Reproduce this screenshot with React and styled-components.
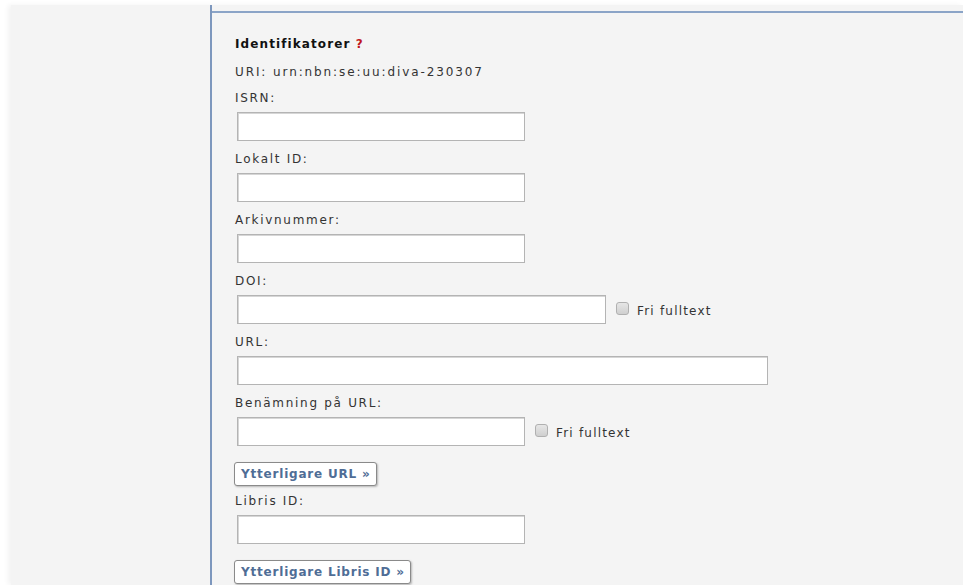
import styled, { createGlobalStyle } from 'styled-components';

const GlobalStyle = createGlobalStyle`
  html, body {
    margin: 0;
    padding: 0;
    background: #ffffff;
  }
  body {
    font-family: "DejaVu Sans", Verdana, sans-serif;
    font-size: 12px;
    color: #333;
  }
`;

const fields = [
  { id: 'isrn', label: 'ISRN:', width: 288 },
  { id: 'local', label: 'Lokalt ID:', width: 288 },
  { id: 'archive', label: 'Arkivnummer:', width: 288 },
  { id: 'doi', label: 'DOI:', width: 369, fulltext: true },
  { id: 'url', label: 'URL:', width: 531 },
  { id: 'urlname', label: 'Benämning på URL:', width: 288, fulltext: true, more: 'Ytterligare URL »' },
  { id: 'libris', label: 'Libris ID:', width: 288, more: 'Ytterligare Libris ID »' },
];

const App = () => {
  return (
    <>
      <GlobalStyle />
      <Page>
        <Sidebar />
        <Main>
          <Panel>
            <Heading>
              Identifikatorer <Help>?</Help>
            </Heading>
            <Uri>URI: urn:nbn:se:uu:diva-230307</Uri>
            {fields.map((f, i) => (
              <Field key={f.id} $afterButton={i > 0 && !!fields[i - 1].more}>
                <Label htmlFor={f.id}>{f.label}</Label>
                <InputRow>
                  <TextInput id={f.id} type="text" $width={f.width} />
                  {f.fulltext && (
                    <CheckLabel>
                      <Check type="checkbox" />
                      Fri fulltext
                    </CheckLabel>
                  )}
                </InputRow>
                {f.more && <MoreButton type="button">{f.more}</MoreButton>}
              </Field>
            ))}
          </Panel>
        </Main>
      </Page>
    </>
  );
};

export default App;

const Page = styled.div`
  display: flex;
  margin: 5px 0 0 11px;
  min-height: 580px;
  background: #f4f4f4;
  box-shadow: -3px 0 5px rgba(0, 0, 0, 0.05);
`;

const Sidebar = styled.aside`
  width: 199px;
  flex-shrink: 0;
`;

const Main = styled.main`
  flex: 1;
  border-left: 2px solid #7d97bd;
  padding-top: 6px;
`;

const Panel = styled.section`
  border-top: 2px solid #8ba4c7;
  padding: 24px 0 0 23px;
`;

const Heading = styled.h3`
  margin: 0;
  font-size: 12px;
  font-weight: bold;
  letter-spacing: 1.1px;
  color: #111;
  line-height: 15px;
`;

const Help = styled.span`
  color: #c0161b;
`;

const Uri = styled.div`
  margin-top: 13px;
  line-height: 15px;
  letter-spacing: 1.9px;
  color: #333;
`;

const Field = styled.div`
  margin-top: ${(p) => (p.$afterButton ? 8 : 11)}px;
  &:first-of-type {
    margin-top: 4px;
  }
`;

const Label = styled.label`
  display: block;
  margin-top: 7px;
  line-height: 15px;
  letter-spacing: 1.7px;
  color: #333;
`;

const InputRow = styled.div`
  display: flex;
  align-items: center;
  margin-top: 6px;
`;

const TextInput = styled.input`
  box-sizing: border-box;
  width: ${(p) => p.$width}px;
  height: 29px;
  margin: 0 0 0 2px;
  border: 1px solid #b4b4b4;
  box-shadow: inset 1px 1px 0 #d6d6d6;
  background: #fff;
  font: inherit;
`;

const CheckLabel = styled.label`
  display: flex;
  align-items: flex-end;
  margin: 2px 0 0 10px;
  color: #333;
  line-height: 15px;
  letter-spacing: 1.2px;
`;

const Check = styled.input`
  appearance: none;
  width: 13px;
  height: 13px;
  margin: 0 8px 4px 0;
  border: 1px solid #b0b0b0;
  border-radius: 3px;
  background: linear-gradient(#e6e6e6, #cfcfcf);
`;

const MoreButton = styled.button`
  display: block;
  margin: 16px 0 0 -1px;
  height: 24px;
  padding: 0 5px 0 6px;
  background: #fff;
  border: 1px solid #8a8a8a;
  border-radius: 3px;
  box-shadow: 1px 1px 2px rgba(0, 0, 0, 0.25);
  font-family: "DejaVu Sans", Verdana, sans-serif;
  font-size: 12px;
  font-weight: bold;
  letter-spacing: 0.8px;
  color: #4f6d96;
`;
